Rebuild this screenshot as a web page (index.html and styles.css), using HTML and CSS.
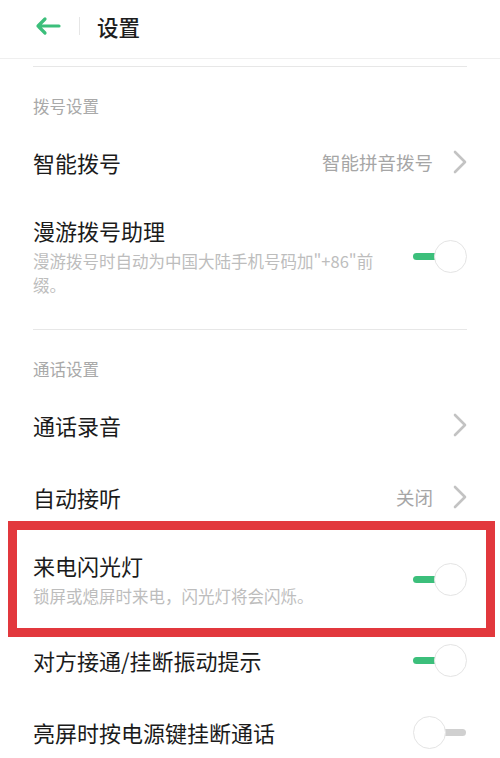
FILE: index.html
```html
<!DOCTYPE html>
<html lang="zh-CN">
<head>
    <meta charset="UTF-8">
    <meta name="viewport" content="width=device-width, initial-scale=1.0">
    <title>设置</title>
    <link rel="stylesheet" href="styles.css">
</head>
<body>
<header class="topbar">
    <svg class="back" width="26" height="20" viewBox="0 0 26 20">
        <path d="M24 10H3M10 3L3 10l7 7" fill="none" stroke="#3cbf7b" stroke-width="3.2" stroke-linecap="round" stroke-linejoin="round"/>
    </svg>
    <span class="bar-sep"></span>
    <h1 class="title">设置</h1>
</header>
<div class="divider first"></div>

<div class="group-title">拨号设置</div>
<div class="row">
    <div class="label">智能拨号</div>
    <div class="value">智能拼音拨号</div>
    <svg class="chevron" width="14" height="24" viewBox="0 0 14 24"><polyline points="2,2 12,12 2,22" fill="none" stroke="#c3c3c3" stroke-width="2.6" stroke-linecap="round" stroke-linejoin="round"/></svg>
</div>
<div class="item">
    <div class="text">
        <div class="label">漫游拨号助理</div>
        <div class="desc">漫游拨号时自动为中国大陆手机号码加"+86"前<br>缀。</div>
    </div>
    <span class="switch on"><i class="track"></i><i class="knob"></i></span>
</div>
<div class="divider"></div>

<div class="group-title">通话设置</div>
<div class="row">
    <div class="label">通话录音</div>
    <svg class="chevron" width="14" height="24" viewBox="0 0 14 24"><polyline points="2,2 12,12 2,22" fill="none" stroke="#c3c3c3" stroke-width="2.6" stroke-linecap="round" stroke-linejoin="round"/></svg>
</div>
<div class="row">
    <div class="label">自动接听</div>
    <div class="value">关闭</div>
    <svg class="chevron" width="14" height="24" viewBox="0 0 14 24"><polyline points="2,2 12,12 2,22" fill="none" stroke="#c3c3c3" stroke-width="2.6" stroke-linecap="round" stroke-linejoin="round"/></svg>
</div>
<div class="item marked">
    <div class="mark"></div>
    <div class="text">
        <div class="label">来电闪光灯</div>
        <div class="desc">锁屏或熄屏时来电，闪光灯将会闪烁。</div>
    </div>
    <span class="switch on"><i class="track"></i><i class="knob"></i></span>
</div>
<div class="row">
    <div class="label">对方接通/挂断振动提示</div>
    <span class="switch on"><i class="track"></i><i class="knob"></i></span>
</div>
<div class="row">
    <div class="label">亮屏时按电源键挂断通话</div>
    <span class="switch"><i class="track"></i><i class="knob"></i></span>
</div>
</body>
</html>
```

FILE: styles.css
```css
body{
    margin: 0;
    background: #fff;
    font-family: "Noto Sans CJK SC", "Noto Sans", sans-serif;
    color: #1b1b1b;
    overflow: hidden;
}

/* top bar */
.topbar{
    height: 52px;
    padding-bottom: 6px;
    display: flex;
    align-items: center;
    border-bottom: 1px solid #efefef;
}
.back{
    margin-left: 35px;
}
.bar-sep{
    width: 1px;
    height: 18px;
    background: #e6e6e6;
    margin: 0 17px 0 18px;
}
.title{
    margin: 0;
    font-size: 21.5px;
    font-weight: 500;
    color: #1e1e1e;
}

.divider{
    margin: 16px 33px 0;
    border-top: 1px solid #e7e7e7;
}
.divider.first{
    margin-top: 7px;
}

.group-title{
    padding: 28px 33px 9px;
    font-size: 16.5px;
    line-height: 22px;
    color: #a9a9a9;
}

/* rows */
.row{
    height: 72px;
    padding: 0 33px;
    display: flex;
    align-items: center;
}
.label{
    font-size: 22px;
    line-height: 30px;
    flex: 1;
}
.value{
    font-size: 18.5px;
    color: #a6a6a6;
    margin-right: 20px;
}
.chevron{
    display: block;
}

.item{
    padding: 17px 33px 16px;
    display: flex;
    align-items: center;
}
.item .text{
    flex: 1;
}
.desc{
    margin-top: 4px;
    font-size: 16.5px;
    line-height: 24px;
    color: #bdbdbd;
}

/* switches */
.switch{
    width: 54px;
    height: 33px;
    position: relative;
    flex-shrink: 0;
}
.switch .track{
    position: absolute;
    top: 13px;
    width: 28px;
    height: 7px;
    border-radius: 4px;
    background: #d0d0d0;
    right: 1px;
}
.switch .knob{
    position: absolute;
    top: 0;
    left: 0;
    width: 31px;
    height: 31px;
    border-radius: 50%;
    background: #fff;
    border: 1px solid #e4e4e4;
}
.switch.on .track{
    left: 0;
    right: auto;
    background: #3cbf7b;
}
.switch.on .knob{
    left: auto;
    right: 0;
}

/* red annotation box */
.marked{
    position: relative;
}
.mark{
    position: absolute;
    top: -12px;
    bottom: -13px;
    left: 8px;
    right: 5px;
    border: 9px solid #e2383d;
    pointer-events: none;
}
```
